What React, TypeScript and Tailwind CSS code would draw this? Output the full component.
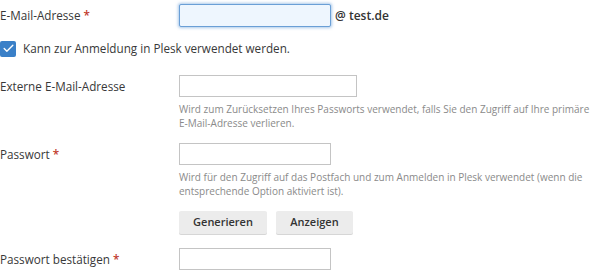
import { Check } from 'lucide-react';

function Req() {
  return <span className="text-[#c0392b] font-semibold"> *</span>;
}

function Label({ children }: { children: React.ReactNode }) {
  return <div className="w-[179px] shrink-0 leading-[22px] text-[11.7px] text-[#383838]">{children}</div>;
}

function Help({ children }: { children: React.ReactNode }) {
  return <p className="mt-[5px] text-[10px] leading-[14px] text-[#8a8a8a]">{children}</p>;
}

const inputCls = 'block h-[22px] border border-[#c4c4c4] bg-white outline-none';

export default function App() {
  return (
    <div className="w-[600px] h-[275px] overflow-hidden bg-white pt-[4px] font-['Open_Sans',sans-serif]">
      {/* E-Mail */}
      <div className="flex items-start">
        <div className="w-[179px] shrink-0 leading-[23px] text-[11.7px] text-[#383838]">
          E-Mail-Adresse<Req />
        </div>
        <div className="flex items-center">
          <input className="block h-[23px] w-[152px] rounded-[2px] border border-[#6a9fd6] bg-[#eef6fe] outline-none shadow-[0_0_3px_1px_rgba(100,155,215,0.55)]" />
          <span className="ml-[4px] text-[12px] font-semibold text-[#333]">@ test.de</span>
        </div>
      </div>

      {/* Checkbox */}
      <label className="mt-[13px] flex items-center gap-[7px]">
        <span className="flex h-[16px] w-[16px] items-center justify-center rounded-[2px] bg-[#3a80c8]">
          <Check size={13} strokeWidth={2.5} className="text-white" />
        </span>
        <span className="text-[11.7px] text-[#383838]">Kann zur Anmeldung in Plesk verwendet werden.</span>
      </label>

      {/* Externe */}
      <div className="mt-[17px] flex items-start">
        <Label>Externe E-Mail-Adresse</Label>
        <div>
          <input className={`${inputCls} w-[178px]`} />
          <Help>
            Wird zum Zurücksetzen Ihres Passworts verwendet, falls Sie den Zugriff auf Ihre primäre
            <br />
            E-Mail-Adresse verlieren.
          </Help>
        </div>
      </div>

      {/* Passwort */}
      <div className="mt-[13px] flex items-start">
        <Label>
          Passwort<Req />
        </Label>
        <div>
          <input type="password" className={`${inputCls} w-[152px]`} />
          <Help>
            Wird für den Zugriff auf das Postfach und zum Anmelden in Plesk verwendet (wenn die
            <br />
            entsprechende Option aktiviert ist).
          </Help>
          <div className="mt-[13px] flex gap-[9px]">
            <button className="h-[23px] w-[88px] rounded-[2px] bg-[#ececec] text-[11px] font-semibold text-[#333] shadow-[0_1px_0_#d6d6d6]">
              Generieren
            </button>
            <button className="h-[23px] w-[77px] rounded-[2px] bg-[#ececec] text-[11px] font-semibold text-[#333] shadow-[0_1px_0_#d6d6d6]">
              Anzeigen
            </button>
          </div>
        </div>
      </div>

      {/* Bestätigen */}
      <div className="mt-[14px] flex items-start">
        <Label>
          Passwort bestätigen<Req />
        </Label>
        <input type="password" className={`${inputCls} w-[152px]`} />
      </div>
    </div>
  );
}
